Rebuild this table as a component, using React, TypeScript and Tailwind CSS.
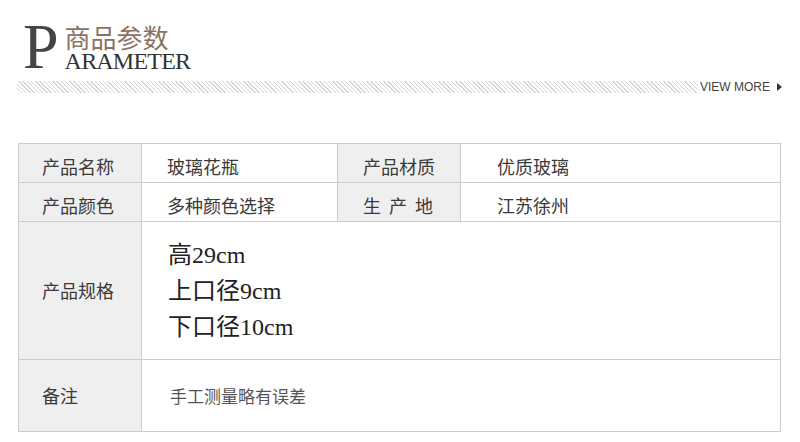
import React from 'react';

const cjk = "font-['Noto_Sans_CJK_SC',sans-serif]";
const serif = "font-['Liberation_Serif','Noto_Sans_CJK_SC',serif]";

const cell = 'border-r border-b border-[#cccccc] flex items-center';
const label = `${cell} bg-[#efefef] pl-[23px] text-[18px] text-[#3a3a3a]`;
const value = `${cell} bg-white text-[18px] text-[#3a3a3a]`;

export default function App() {
  return (
    <div className={`w-[800px] h-[442px] bg-white overflow-hidden ${cjk}`}>
      {/* title block */}
      <div className="h-[81px] flex items-start pl-[23px] pt-[15px]">
        <span className={`${serif} text-[64px] leading-none text-[#444]`}>P</span>
        <div className="ml-[6px] mt-[9px] flex flex-col">
          <span className={`${cjk} text-[26px] leading-[25px] text-[#8a7365]`}>商品参数</span>
          <span className={`${serif} text-[24px] leading-none text-[#333] tracking-[-0.8px]`}>ARAMETER</span>
        </div>
      </div>

      <div className="flex items-center pl-[17px] pr-[18px]">
        <div className="flex-1 h-[12px] bg-[image:repeating-linear-gradient(45deg,#d6d6d6_0,#d6d6d6_1px,transparent_1px,transparent_3px)]" />
        <span className="ml-[2px] font-['Liberation_Sans',sans-serif] text-[12px] leading-none text-[#444]">VIEW MORE</span>
        <svg width="5" height="8" viewBox="0 0 5 8" className="ml-[7px]">
          <path d="M0 0 L5 4 L0 8 Z" fill="#333" />
        </svg>
      </div>

      <div className="mt-[50px] ml-[18px] w-[763px] border-l border-t border-[#cccccc] grid grid-cols-[123px_196px_123px_320px]">
        <div className={`${label} h-[39px] pt-[7px]`}>产品名称</div>
        <div className={`${value} h-[39px] pt-[7px] pl-[25px]`}>玻璃花瓶</div>
        <div className={`${label} h-[39px] pt-[7px] !pl-[25px]`}>产品材质</div>
        <div className={`${value} h-[39px] pt-[7px] pl-[36px]`}>优质玻璃</div>

        <div className={`${label} h-[39px] pt-[7px]`}>产品颜色</div>
        <div className={`${value} h-[39px] pt-[7px] pl-[25px]`}>多种颜色选择</div>
        <div className={`${label} h-[39px] pt-[7px] !pl-[25px] tracking-[8px]`}>生产地</div>
        <div className={`${value} h-[39px] pt-[7px] pl-[36px]`}>江苏徐州</div>

        <div className={`${label} h-[138px]`}>产品规格</div>
        <div className={`${value} col-span-3 h-[138px] pl-[26px]`}>
          <div className={`${serif} text-[24px] leading-[36px] text-[#222]`}>
            <div>高29cm</div>
            <div>上口径9cm</div>
            <div>下口径10cm</div>
          </div>
        </div>

        <div className={`${label} h-[72px]`}>备注</div>
        <div className={`${value} col-span-3 h-[72px] pl-[28px] !text-[17px] !text-[#555]`}>手工测量略有误差</div>
      </div>
    </div>
  );
}
